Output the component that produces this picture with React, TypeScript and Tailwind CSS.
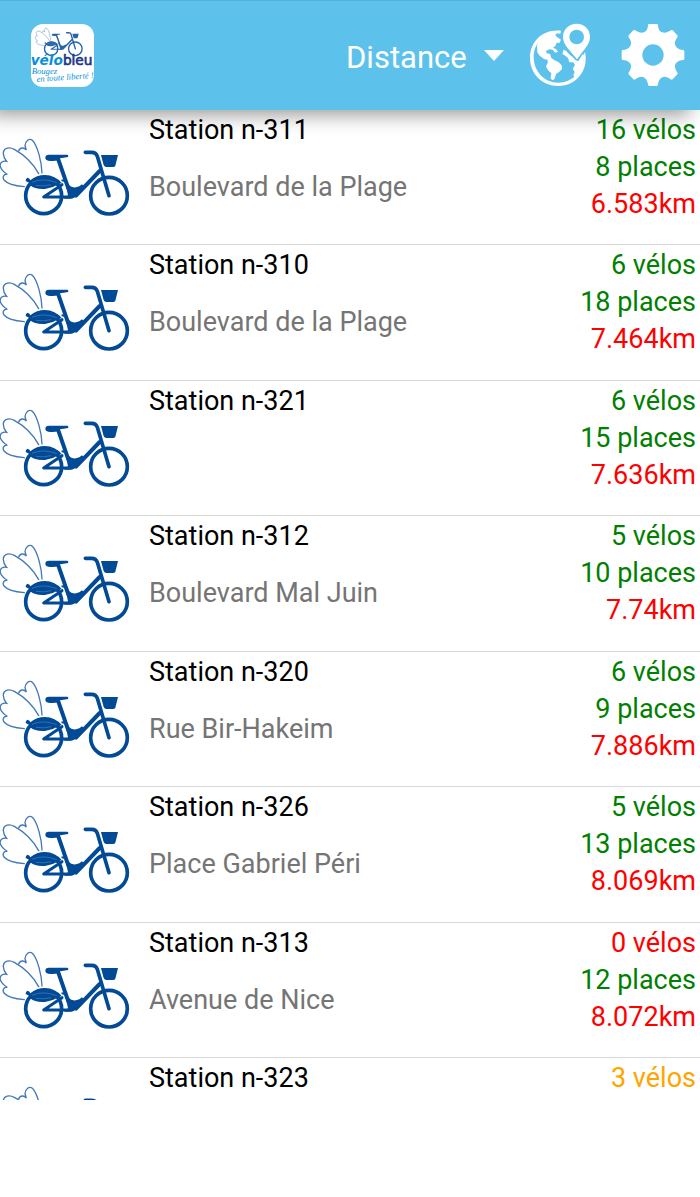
import {useState} from 'react';

type Station = {
  name: string;
  street?: string;
  bikes: number;
  places?: number;
  distance?: string;
};

const stations: Station[] = [
  {name: 'Station n-311', street: 'Boulevard de la Plage', bikes: 16, places: 8, distance: '6.583km'},
  {name: 'Station n-310', street: 'Boulevard de la Plage', bikes: 6, places: 18, distance: '7.464km'},
  {name: 'Station n-321', bikes: 6, places: 15, distance: '7.636km'},
  {name: 'Station n-312', street: 'Boulevard Mal Juin', bikes: 5, places: 10, distance: '7.74km'},
  {name: 'Station n-320', street: 'Rue Bir-Hakeim', bikes: 6, places: 9, distance: '7.886km'},
  {name: 'Station n-326', street: 'Place Gabriel Péri', bikes: 5, places: 13, distance: '8.069km'},
  {name: 'Station n-313', street: 'Avenue de Nice', bikes: 0, places: 12, distance: '8.072km'},
  {name: 'Station n-323', bikes: 3},
];

const countColor = (count: number) => {
  if (count === 0) return 'text-[#ff0000]';
  if (count < 5) return 'text-[#ffa500]';
  return 'text-[#008000]';
};

const BikeShapes = () => (
  <>
    <g fill="none" stroke="#4479b8" strokeWidth="4" strokeLinecap="round">
      <path d="M126 144C125 112 113 62 97 46C88 38 76 48 75 62L79 75C73 67 60 66 56 78"/>
      <path d="M116 146C100 116 70 88 43 73C28 65 12 68 10 82C9 92 14 102 20 109C8 107 -2 113 1 125C4 137 14 143 22 148C12 146 6 156 12 165C22 177 50 183 73 185"/>
    </g>
    <g fill="none" stroke="#024a96" strokeLinecap="round" strokeLinejoin="round">
      <circle cx="131" cy="212" r="54" strokeWidth="11"/>
      <circle cx="327" cy="212" r="55" strokeWidth="11"/>
      <path d="M173 98L205 190" strokeWidth="12"/>
      <path d="M256 82H275Q288 82 292 94L327 212" strokeWidth="11"/>
      <path d="M299 138L228 212" strokeWidth="12"/>
      <path d="M186 179L131 216H215" strokeWidth="9"/>
      <path d="M187 166L200 170" strokeWidth="6"/>
    </g>
    <g fill="#024a96">
      <path d="M136 98Q136 89 147 89H201Q207 90 204 96Q190 99 180 100L176 106Q160 109 145 107Q136 105 136 98Z"/>
      <path d="M196 174L208 181Q214 189 228 187Q239 185 246 178L254 186L230 213Q222 221 210 221H192L204 211Z"/>
      <path d="M303 90H354L346 122Q344 126 339 126H318Q313 125 311 120Z"/>
      <path d="M77 168Q76 160 83 158Q90 160 91 166Q110 150 135 150Q166 151 185 174L176 178Q158 189 135 192Q105 194 91 181Q92 174 88 174Z"/>
    </g>
    <path d="M96 172Q130 157 170 173M108 181Q132 185 153 179" fill="none" stroke="#2f70b0" strokeWidth="3"/>
  </>
);

const Logo = () => (
  <svg className="h-[63px] w-[63px] rounded-[12px] bg-white" viewBox="0 0 189 189" aria-label="vélobleu">
    <g transform="translate(12 -7) scale(0.37)" opacity="0.85">
      <g transform="translate(0 8)">
        <BikeShapes/>
      </g>
    </g>
    <g fontFamily="'DejaVu Sans', sans-serif" fontSize="41">
      <text x="-1" y="123" fill="#078fd8">
        <tspan fontStyle="italic" fontWeight="700">vélo</tspan>
        <tspan fill="#213589" stroke="#213589" strokeWidth="2">bleu</tspan>
      </text>
    </g>
    <g fill="#078fd8" fontFamily="'Liberation Serif', serif" fontStyle="italic" fontSize="26">
      <text x="2" y="150">Bougez</text>
      <text x="17" y="174" transform="rotate(-4 17 174)">en toute liberté !</text>
    </g>
  </svg>
);

const GlobeIcon = () => (
  <svg className="h-16 w-[62px]" viewBox="27 69 186 192" fill="white" aria-hidden="true">
    <path d="M123 92L121 101C73 98 41 131 41 171C41 216 76 249 115 248C157 247 190 214 190 176L187 170L195 156C207 210 169 258 115 258C65 258 30 220 30 174C30 120 73 86 123 92Z"/>
    <path d="M51 137C60 113 81 99 108 99L107 107L112 112L123 119L118 129L110 128L106 138L99 143L108 147L114 155L106 158L98 149L88 148L78 153L80 160L90 162L94 174L104 181L115 186L125 196L126 207L117 216L108 222L103 238L96 241L92 233L94 220L84 211L78 199L84 187L82 179L72 177L59 167L52 157Z"/>
    <path d="M131 149C140 151 145 162 157 170L166 180L175 184L188 162L191 176C190 200 181 217 164 232L160 226L164 216L158 206L165 195L160 187L148 187L144 174L136 167L127 162Z"/>
    <path fillRule="evenodd" d="M170 71C193 71 210 88 210 111C210 122 205 133 198 142L171 178L141 142C134 132 129 122 129 111C129 88 147 71 170 71ZM170 89A22 22 0 1 0 170 133A22 22 0 1 0 170 89Z"/>
  </svg>
);

const GearIcon = () => (
  <svg className="h-16 w-16" viewBox="304 69 192 192" fill="white" aria-hidden="true">
    <path
      fillRule="evenodd"
      d="M388 72H412Q415 72 415 76C416 92 424 98 434 98C442 98 448 94 455 90L459 91L473 106L474 110C468 119 465 124 466 132C468 142 476 149 490 150Q494 150 494 154V176Q494 180 490 180C476 181 468 187 466 196C465 204 468 211 474 219L473 223L459 238L455 239C447 233 441 230 434 230C424 231 417 239 415 253Q415 258 411 258H389Q385 258 385 253C383 239 376 231 366 230C359 230 353 233 345 239L341 238L327 223L326 219C332 211 335 204 334 196C332 187 324 181 310 180Q306 180 306 176V154Q306 150 310 150C324 149 332 142 334 132C335 124 332 119 326 110L327 106L341 91L345 90C352 94 358 98 366 98C376 98 384 92 385 76Q385 72 388 72ZM400 133A32 32 0 1 0 400 197A32 32 0 1 0 400 133Z"
    />
  </svg>
);

const Header = () => {
  const [sort, setSort] = useState('Distance');

  return (
    <header
      className="relative z-10 flex h-[110px] shrink-0 items-center border-t border-[#52b0da] bg-[#5dc2eb] pr-[15px] pb-px pl-[31px] shadow-[-10px_5px_18px_rgba(0,0,0,0.4)]">
      <a href="#accueil">
        <Logo/>
      </a>
      <div className="ml-auto grid items-center">
        <select
          className="col-start-1 row-start-1 h-12 w-[158px] appearance-none bg-transparent pt-1 text-[31px] text-white outline-none"
          aria-label="Trier par"
          value={sort}
          onChange={(e) => setSort(e.target.value)}
        >
          <option>Distance</option>
          <option>Vélos</option>
          <option>Places</option>
        </select>
        <svg
          className="pointer-events-none col-start-1 row-start-1 h-[11px] w-5 justify-self-end"
          viewBox="0 0 20 11"
          fill="white"
          aria-hidden="true"
        >
          <path d="M0 0H20L10 11Z"/>
        </svg>
      </div>
      <button className="ml-[25px]" type="button" aria-label="Carte">
        <GlobeIcon/>
      </button>
      <button className="ml-[30px]" type="button" aria-label="Réglages">
        <GearIcon/>
      </button>
    </header>
  );
};

const StationRow = ({station}: {station: Station}) => (
  <li className="flex h-[135px] items-start border-b border-[#d8d8d8] pr-1 even:h-[136px]">
    <svg className="mt-[15px] h-[118px] w-[130px] shrink-0" viewBox="0 0 390 354" aria-hidden="true">
      <BikeShapes/>
    </svg>
    <div className="ml-[19px] min-w-0 flex-1 pt-0.5">
      <h2 className="text-black">{station.name}</h2>
      {station.street && <p className="mt-5 text-[#757575]">{station.street}</p>}
    </div>
    <div className="pt-0.5 text-right">
      <p className={countColor(station.bikes)}>{station.bikes} vélos</p>
      {station.places !== undefined && (
        <p className={countColor(station.places)}>{station.places} places</p>
      )}
      {station.distance && <p className="text-[#ff0000]">{station.distance}</p>}
    </div>
  </li>
);

const App = () => {
  return (
    <div className="flex h-screen flex-col bg-white font-['Roboto',sans-serif]">
      <Header/>
      <main className="min-h-0 flex-1 overflow-y-auto [scrollbar-width:none]">
        <ul className="text-[27px] leading-[37px]">
          {stations.map((station) => (
            <StationRow key={station.name} station={station}/>
          ))}
        </ul>
      </main>
      <footer className="h-[97px] shrink-0"/>
    </div>
  );
};

export default App;
